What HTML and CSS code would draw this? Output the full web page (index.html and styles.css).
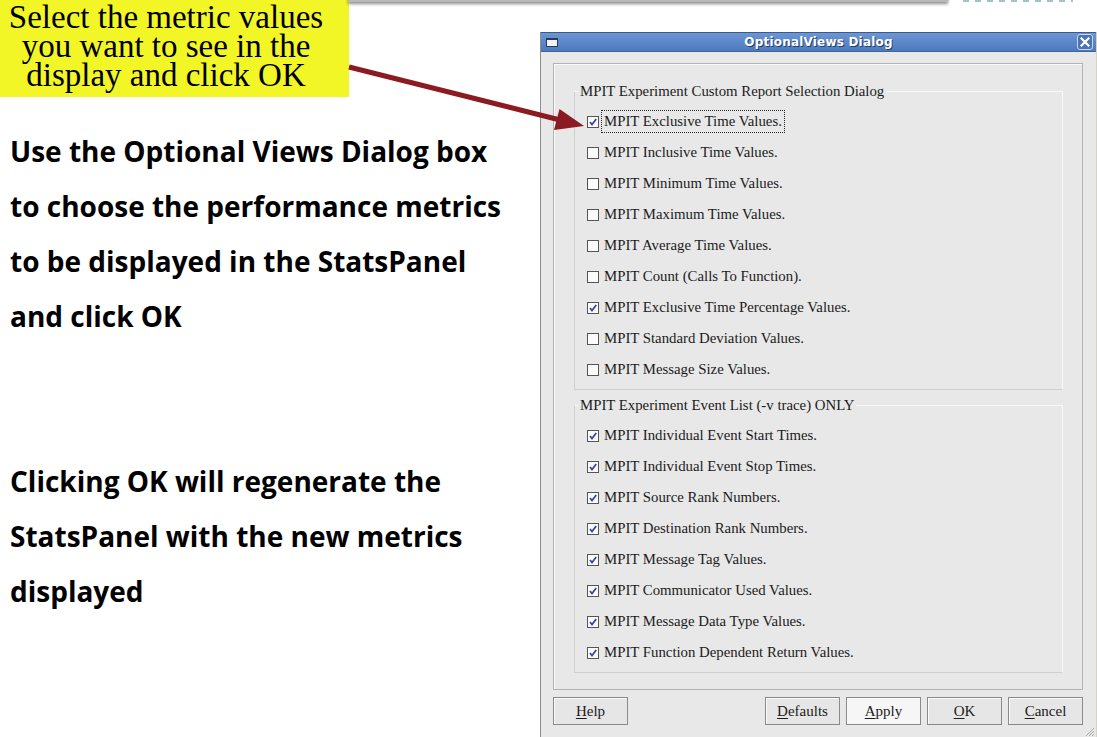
FILE: index.html
```html
<!DOCTYPE html>
<html>
<head>
<meta charset="utf-8">
<link rel="stylesheet" href="styles.css">
</head>
<body>
<div class="page">
  <div class="topstrip"></div>
  <div class="topteal"></div>
  <div class="left">
    <div class="callout">Select the metric values<br>you want to see in the<br>display and click OK</div>
    <div class="notes">
      <p>Use the Optional Views Dialog box<br>to choose the performance metrics<br>to be displayed in the StatsPanel<br>and click OK</p>
      <p class="second">Clicking OK will regenerate the<br>StatsPanel with the new metrics<br>displayed</p>
    </div>
  </div>
  <div class="right">
    <div class="dialog">
      <div class="titlebar">
        <span class="menu-btn"></span>
        <span class="title">OptionalViews Dialog</span>
        <span class="close-btn"><svg width="10" height="10" viewBox="0 0 10 10"><path d="M1.5 1.5 L8.5 8.5 M8.5 1.5 L1.5 8.5" stroke="#fff" stroke-width="2.2" stroke-linecap="square"/></svg></span>
      </div>
      <div class="dbody">
        <div class="frame">
          <fieldset class="group">
            <legend>MPIT Experiment Custom Report Selection Dialog</legend>
            <div class="item"><span class="cb on"></span><span class="lbl focus">MPIT Exclusive Time Values.</span></div>
            <div class="item"><span class="cb"></span><span class="lbl">MPIT Inclusive Time Values.</span></div>
            <div class="item"><span class="cb"></span><span class="lbl">MPIT Minimum Time Values.</span></div>
            <div class="item"><span class="cb"></span><span class="lbl">MPIT Maximum Time Values.</span></div>
            <div class="item"><span class="cb"></span><span class="lbl">MPIT Average Time Values.</span></div>
            <div class="item"><span class="cb"></span><span class="lbl">MPIT Count (Calls To Function).</span></div>
            <div class="item"><span class="cb on"></span><span class="lbl">MPIT Exclusive Time Percentage Values.</span></div>
            <div class="item"><span class="cb"></span><span class="lbl">MPIT Standard Deviation Values.</span></div>
            <div class="item"><span class="cb"></span><span class="lbl">MPIT Message Size Values.</span></div>
          </fieldset>
          <fieldset class="group group2">
            <legend>MPIT Experiment Event List (-v trace) ONLY</legend>
            <div class="item"><span class="cb on"></span><span class="lbl">MPIT Individual Event Start Times.</span></div>
            <div class="item"><span class="cb on"></span><span class="lbl">MPIT Individual Event Stop Times.</span></div>
            <div class="item"><span class="cb on"></span><span class="lbl">MPIT Source Rank Numbers.</span></div>
            <div class="item"><span class="cb on"></span><span class="lbl">MPIT Destination Rank Numbers.</span></div>
            <div class="item"><span class="cb on"></span><span class="lbl">MPIT Message Tag Values.</span></div>
            <div class="item"><span class="cb on"></span><span class="lbl">MPIT Communicator Used Values.</span></div>
            <div class="item"><span class="cb on"></span><span class="lbl">MPIT Message Data Type Values.</span></div>
            <div class="item"><span class="cb on"></span><span class="lbl">MPIT Function Dependent Return Values.</span></div>
          </fieldset>
        </div>
        <div class="buttons">
          <span class="btn"><u>H</u>elp</span>
          <span class="spacer"></span>
          <span class="btn"><u>D</u>efaults</span>
          <span class="btn hover"><u>A</u>pply</span>
          <span class="btn"><u>O</u>K</span>
          <span class="btn"><u>C</u>ancel</span>
        </div>
        <svg class="grip" width="12" height="12" viewBox="0 0 12 12"><path d="M11 3 L3 11 M11 6 L6 11 M11 9 L9 11" stroke="#a9a9a9" stroke-width="1"/></svg>
      </div>
    </div>
  </div>
  <svg class="arrow" width="1097" height="737" viewBox="0 0 1097 737">
    <line x1="349" y1="67" x2="560" y2="120" stroke="#8b1a22" stroke-width="5"/>
    <polygon points="584,126 559.5,109 554,130" fill="#8b1a22"/>
  </svg>
</div>
</body>
</html>
```

FILE: styles.css
```css
html, body {
  margin: 0;
  padding: 0;
  background: #ffffff;
}
body {
  width: 1097px;
  height: 737px;
  overflow: hidden;
}
.page {
  position: relative;
  display: flex;
  width: 1097px;
  height: 737px;
}
.topstrip {
  position: absolute;
  left: 348px;
  top: -10px;
  width: 600px;
  height: 12px;
  background: #b9b9b9;
  box-shadow: 0 2px 3px rgba(0,0,0,0.45);
}
.topteal {
  position: absolute;
  left: 963px;
  top: 0;
  width: 110px;
  height: 2px;
  background: repeating-linear-gradient(90deg, #9cc7c7 0 6px, transparent 6px 12px);
}
.left {
  width: 540px;
  flex: none;
}
.callout {
  width: 349px;
  height: 97px;
  box-sizing: border-box;
  padding: 3px 17px 0 0;
  background: #f2f626;
  font-family: "Liberation Serif", "Times New Roman", serif;
  font-size: 33px;
  line-height: 29px;
  text-align: center;
  color: #000;
}
.notes {
  padding-left: 10px;
  margin-top: 27px;
  font-family: "Open Sans", "Liberation Sans", sans-serif;
  font-weight: 700;
  font-size: 28px;
  line-height: 55px;
  color: #000;
}
.notes p {
  margin: 0;
}
.notes p.second {
  margin-top: 110px;
}
.right {
  flex: 1;
  padding-top: 32px;
}
.dialog {
  position: relative;
  width: 557px;
  border-left: 1px solid #8f8f8f;
  border-right: 1px solid #d8d2c0;
  box-sizing: border-box;
  background: #e8e8e8;
}
.titlebar {
  position: relative;
  height: 20px;
  box-sizing: border-box;
  border-top: 1px solid #3a5a8c;
  border-bottom: 1px solid #3f64a0;
  background: linear-gradient(#6c95d2, #4d79bd);
  display: flex;
  align-items: center;
  justify-content: center;
}
.title {
  font-family: "DejaVu Sans", sans-serif;
  font-weight: 700;
  font-size: 12px;
  color: #fff;
  text-shadow: 1px 1px 0 #243c66;
  letter-spacing: 0.2px;
}
.menu-btn {
  position: absolute;
  left: 5px;
  top: 5px;
  width: 10px;
  height: 6px;
  background: #f2f2f2;
  border: 1px solid #2a3a58;
  border-top-width: 2px;
}
.close-btn {
  position: absolute;
  right: 3px;
  top: 1px;
  width: 14px;
  height: 14px;
  border: 1px solid #c8d6ee;
  border-radius: 3px;
  background: #4b74b6;
  display: flex;
  align-items: center;
  justify-content: center;
}
.dbody {
  position: relative;
  padding: 11px 13px 12px 12px;
}
.frame {
  border: 1px solid #b3b3b3;
  box-shadow: inset 1px 1px 0 #fafafa;
  height: 627px;
  box-sizing: border-box;
  padding: 19px 19px 0 20px;
}
.group {
  margin: 0;
  padding: 7px 0 4px 3px;
  border: 1px solid #f8f8f8;
  border-left-color: #cfcfcf;
  border-bottom-color: #cfcfcf;
  min-inline-size: 0;
}
.group2 {
  margin-top: 7px;
}
.group legend {
  padding: 0 2px;
  font-family: "Liberation Serif", "Times New Roman", serif;
  font-size: 14.8px;
  line-height: 16px;
  color: #1b1b1b;
}
.item {
  display: flex;
  align-items: center;
  height: 31px;
  padding-left: 9px;
  font-family: "Liberation Serif", "Times New Roman", serif;
  font-size: 14.8px;
  color: #1b1b1b;
}
.cb {
  width: 10px;
  height: 10px;
  border: 1px solid #555;
  background-color: #fbfbfb;
  margin-right: 5px;
  flex: none;
}
.cb.on {
  background-image: url("data:image/svg+xml;utf8,<svg xmlns='http://www.w3.org/2000/svg' width='10' height='10' viewBox='0 0 10 10'><path d='M2 5 L4 7.5 L8.2 2' fill='none' stroke='%233a44a8' stroke-width='1.8'/></svg>");
  background-repeat: no-repeat;
}
.lbl.focus {
  outline: 1px dotted #222;
  outline-offset: 2px;
}
.buttons {
  display: flex;
  gap: 6px;
  margin-top: 7px;
  height: 28px;
}
.spacer {
  flex: 1;
}
.btn {
  width: 75px;
  height: 28px;
  box-sizing: border-box;
  border: 1px solid #8a8a8a;
  box-shadow: inset 1px 1px 0 #fbfbfb;
  background: #e6e6e6;
  display: flex;
  align-items: center;
  justify-content: center;
  font-family: "Liberation Serif", "Times New Roman", serif;
  font-size: 15px;
  color: #1b1b1b;
}
.btn.hover {
  background: #f6f6f6;
}
.btn u {
  text-decoration-thickness: 1px;
  text-underline-offset: 2px;
}
.grip {
  position: absolute;
  right: 1px;
  bottom: 0;
}
.arrow {
  position: absolute;
  left: 0;
  top: 0;
  pointer-events: none;
}
```
